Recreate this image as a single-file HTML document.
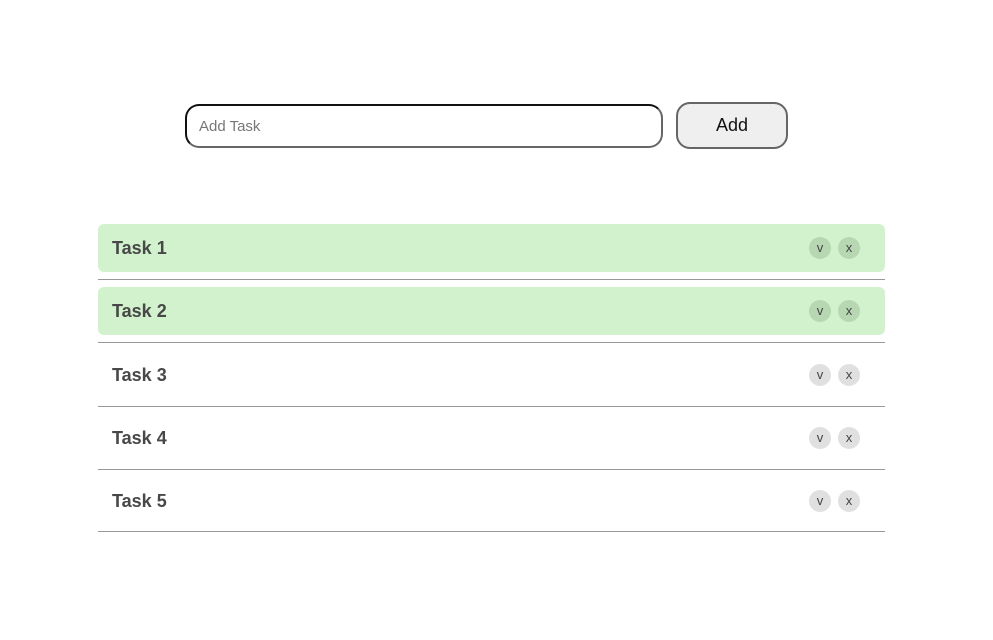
<!DOCTYPE html>
<html><head><style>
body{margin:0;width:993px;height:640px;background:#fff;font-family:"Liberation Sans",Arial,sans-serif;position:relative;overflow:hidden}
.inp{position:absolute;left:185px;top:104px;width:474px;height:40px;border:2px solid #666;border-top-color:#111;border-left-color:#111;border-radius:14px;box-sizing:content-box}
.inp span{position:absolute;left:12px;top:12px;font-size:15px;color:#777}
.btn{position:absolute;left:676px;top:102px;width:108px;height:43px;border:2px solid #666;border-radius:14px;background:#efefef;text-align:center;line-height:43px;font-size:18px;color:#111}
.row{position:absolute;left:98px;width:787px;height:48px;border-radius:6px}
.row.g{background:#d2f2cd}
.row b{position:absolute;left:14px;top:14px;font-size:18px;color:#484848;font-weight:bold}
.c{position:absolute;top:13px;width:22px;height:22px;border-radius:50%;text-align:center;line-height:21px;font-size:13px;color:#444}
.g .c{background:#b6d7b2}
.row:not(.g) .c{background:#e0e0e0}
.line{position:absolute;left:98px;width:787px;height:0;border-top:1.5px solid #999}
</style></head><body>
<div class="inp"><span>Add Task</span></div>
<div class="btn">Add</div>

<div class="row g" style="top:224px"><b>Task 1</b><div class="c" style="left:711px">v</div><div class="c" style="left:740px">x</div></div>
<div class="line" style="top:279px"></div>
<div class="row g" style="top:287px"><b>Task 2</b><div class="c" style="left:711px">v</div><div class="c" style="left:740px">x</div></div>
<div class="line" style="top:342px"></div>
<div class="row" style="top:351px"><b>Task 3</b><div class="c" style="left:711px">v</div><div class="c" style="left:740px">x</div></div>
<div class="line" style="top:406px"></div>
<div class="row" style="top:414px"><b>Task 4</b><div class="c" style="left:711px">v</div><div class="c" style="left:740px">x</div></div>
<div class="line" style="top:469px"></div>
<div class="row" style="top:477px"><b>Task 5</b><div class="c" style="left:711px">v</div><div class="c" style="left:740px">x</div></div>
<div class="line" style="top:531px"></div>
</body></html>
